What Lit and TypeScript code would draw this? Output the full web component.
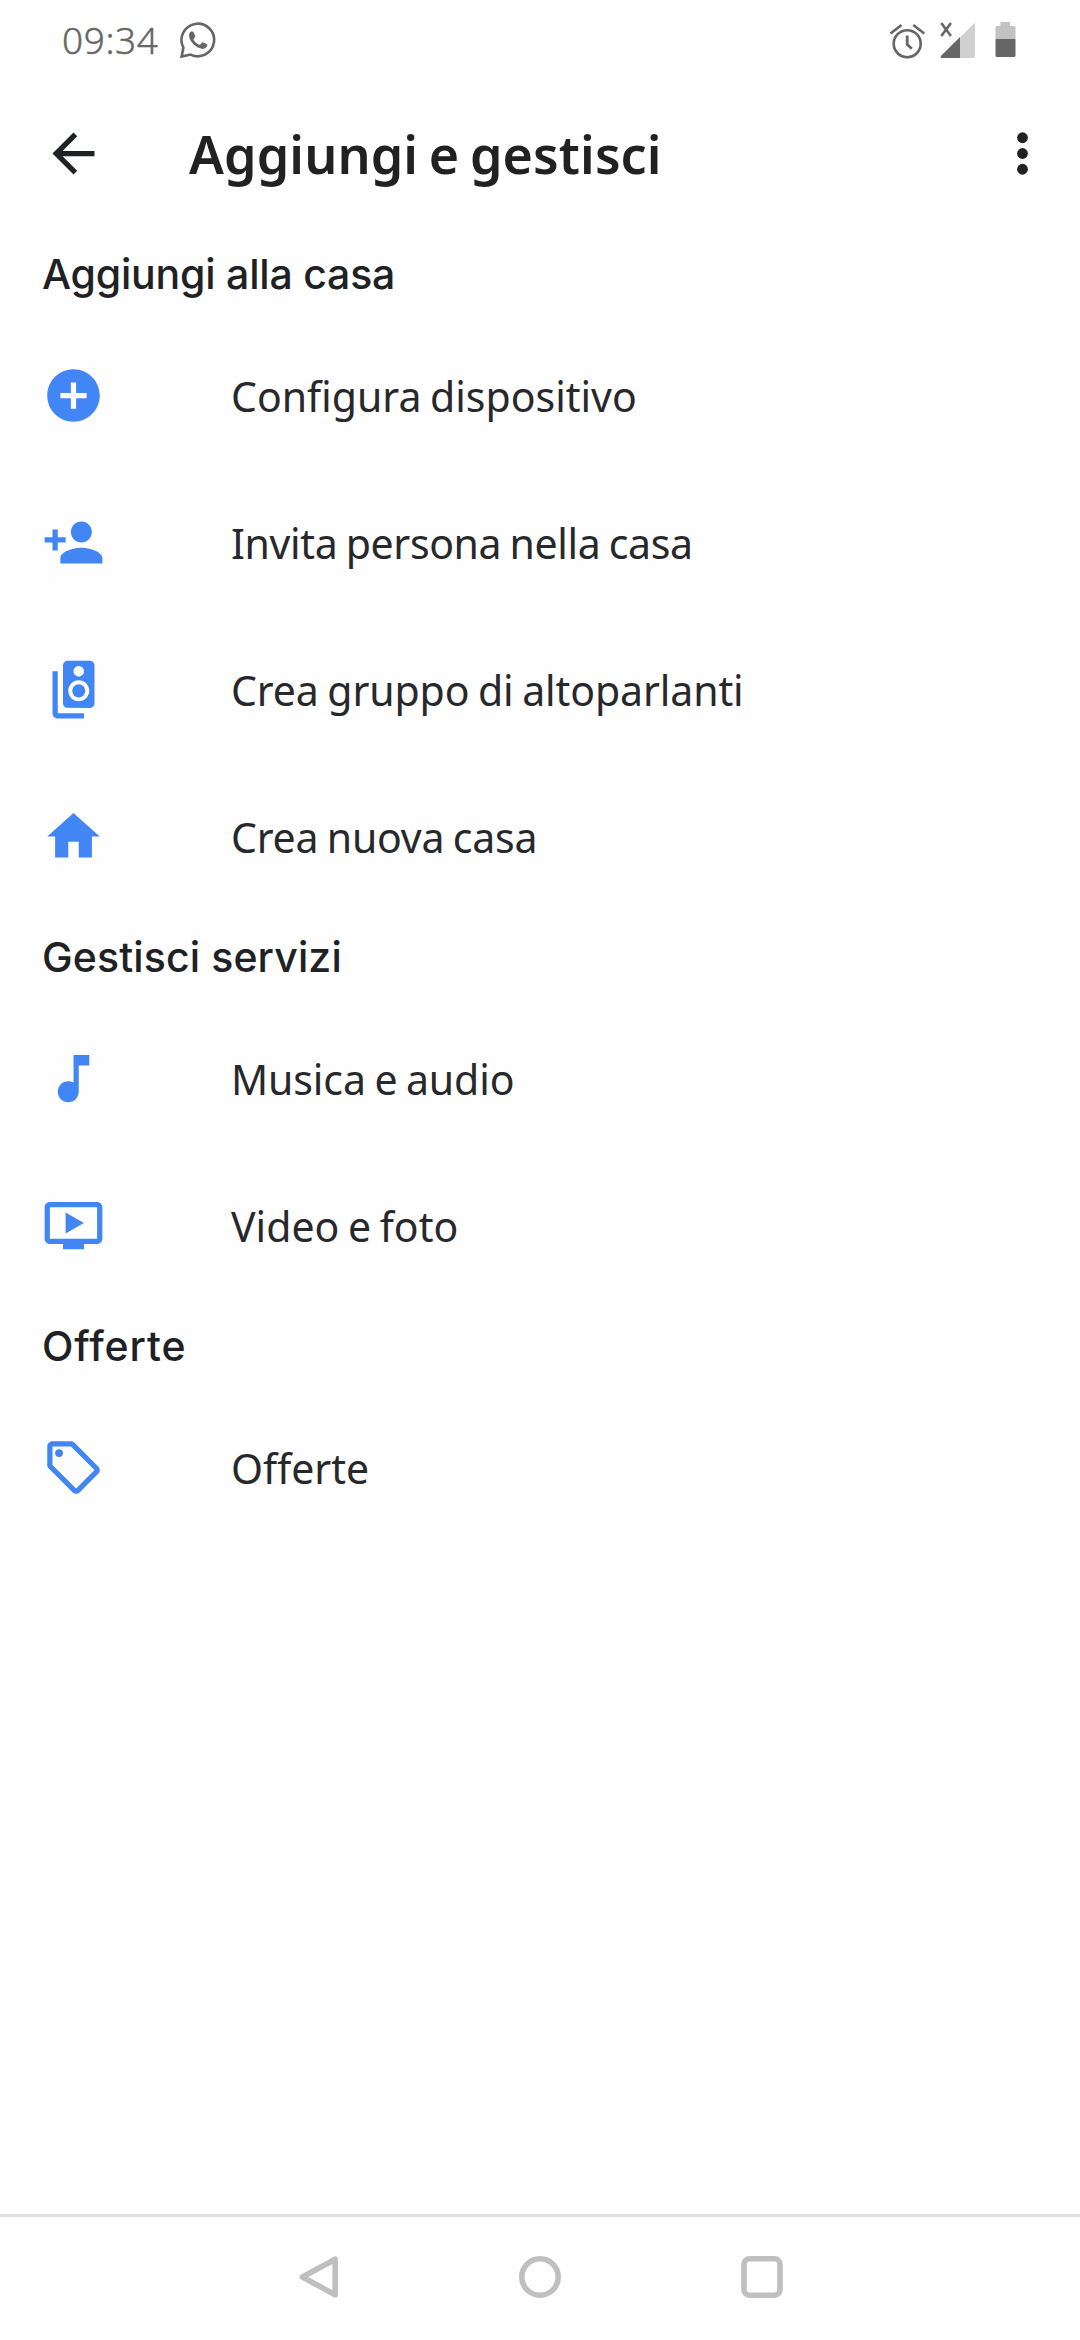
import { LitElement, html, css, svg, type SVGTemplateResult } from "lit";
import { styleMap } from "lit/directives/style-map.js";

interface Item {
  label: string;
  icon: SVGTemplateResult;
  tracking: number;
}

interface Section {
  title: string;
  tracking: number;
  items: Item[];
}

const addCircle = svg`<path d="M12 2C6.48 2 2 6.48 2 12s4.48 10 10 10 10-4.48 10-10S17.52 2 12 2zm5 11h-4v4h-2v-4H7v-2h4V7h2v4h4v2z"/>`;
const personAdd = svg`<path d="M15 12c2.21 0 4-1.79 4-4s-1.79-4-4-4-4 1.79-4 4 1.79 4 4 4zm-9-2V7H4v3H1v2h3v3h2v-3h3v-2H6zm9 4c-2.67 0-8 1.34-8 4v2h16v-2c0-2.66-5.33-4-8-4z"/>`;
const speakerGroup = svg`<path d="M18.2 1H9.8C8.81 1 8 1.81 8 2.8v14.4c0 .99.81 1.79 1.8 1.79l8.4.01c.99 0 1.8-.81 1.8-1.8V2.8c0-.99-.81-1.8-1.8-1.8zM14 3c1.1 0 2 .89 2 2s-.9 2-2 2-2-.89-2-2 .9-2 2-2zm0 13.5c-2.21 0-4-1.79-4-4s1.79-4 4-4 4 1.79 4 4-1.79 4-4 4z"/><circle cx="14" cy="12.5" r="2.5"/><path d="M6 5H4v16c0 1.1.89 2 2 2h10v-2H6V5z"/>`;
const home = svg`<path d="M10 20v-6h4v6h5v-8h3L12 3 2 12h3v8z"/>`;
const musicNote = svg`<path d="M12 3v10.55c-.59-.34-1.27-.55-2-.55-2.21 0-4 1.79-4 4s1.79 4 4 4 4-1.79 4-4V7h4V3h-6z"/>`;
const onDemandVideo = svg`<path d="M21 3H3c-1.11 0-2 .89-2 2v12c0 1.1.89 2 2 2h5v2h8v-2h5c1.1 0 1.99-.9 1.99-2L23 5c0-1.11-.9-2-2-2zm0 14H3V5h18v12zm-5-6l-7 4V7z"/>`;
const tag = svg`<path d="M21.41 11.58l-9-9C12.05 2.22 11.55 2 11 2H4c-1.1 0-2 .9-2 2v7c0 .55.22 1.05.59 1.42l9 9c.36.36.86.58 1.41.58s1.05-.22 1.41-.59l7-7c.37-.36.59-.86.59-1.41s-.23-1.06-.59-1.42zM13 20.01L4 11V4h7v-.01l9 9-7 7.02z"/><circle cx="6.5" cy="6.5" r="1.5"/>`;

const sections: Section[] = [
  {
    title: "Aggiungi alla casa",
    tracking: -0.2,
    items: [
      { label: "Configura dispositivo", icon: addCircle, tracking: 0 },
      { label: "Invita persona nella casa", icon: personAdd, tracking: -0.35 },
      { label: "Crea gruppo di altoparlanti", icon: speakerGroup, tracking: -0.1 },
      { label: "Crea nuova casa", icon: home, tracking: -0.2 },
    ],
  },
  {
    title: "Gestisci servizi",
    tracking: 0.12,
    items: [
      { label: "Musica e audio", icon: musicNote, tracking: -0.1 },
      { label: "Video e foto", icon: onDemandVideo, tracking: 0 },
    ],
  },
  { title: "Offerte", tracking: 0.9, items: [{ label: "Offerte", icon: tag, tracking: 0 }] },
];

class StatusBar extends LitElement {
  static styles = css`
    :host {
      display: flex;
      align-items: flex-start;
      box-sizing: border-box;
      height: 80px;
      padding: 22px 64px 0 62px;
      color: #666;
      font-family: "Noto Sans", sans-serif;
    }
    .time {
      font-size: 37px;
      font-weight: 300;
      line-height: 35px;
      letter-spacing: 0.6px;
      width: 118px;
      -webkit-text-stroke: 0.4px #666;
    }
    svg {
      display: block;
      flex: none;
    }
    .spacer {
      flex: 1;
    }
    .alarm {
      margin-right: 15px;
    }
    .signal {
      margin-right: 20px;
    }
  `;

  render() {
    return html`
      <span class="time">09:34</span>
      <svg width="36" height="36" viewBox="0 0 36 36">
        <path
          d="M1.6 34.6 L3.4 25.6 A16.3 16.3 0 1 1 10.6 32.6 Z"
          fill="none" stroke="#666" stroke-width="2.6"
        />
        <path
          fill="#666"
          d="M9.3 11.8c.4-1.6 1.4-2.2 2.4-2.2 1.200 0 1.700.1 2.100 1.100l1.300 3.100c.3.8.1 1.300-.3 1.800l-1.100 1.300c-.3.4-.3.6 0 1.100 1.400 2.200 3 3.600 5.400 4.700.5.2.8.2 1.200-.2l1.500-1.800c.4-.5.8-.5 1.300-.3l3.300 1.600c.7.3 1 .6.9 1.300-.2 1.900-1.700 3.100-3.500 3.500-2.200.4-5.300-.7-8-2.700-2.600-1.900-4.900-4.600-6-7.200-.7-1.700-.9-3.700-.5-5.100z"
        />
      </svg>
      <span class="spacer"></span>
      <svg class="alarm" width="36" height="37" viewBox="0 0 36 37" fill="none" stroke="#666">
        <circle cx="18.200" cy="21.700" r="13.500" stroke-width="2.600" />
        <path d="M18.200 13.600v8.800l4.600 4.400" stroke-width="2.800" />
        <path d="M1.500 11.600l11-8.600M24.300 3l11 8.600" stroke-width="2.600" />
      </svg>
      <svg class="signal" width="35" height="37" viewBox="0 0 35 37">
        <path d="M35 1v32.500q0 2.500-2.500 2.500H20V15.500L34 1.400z" fill="#d0d0d0" />
        <path d="M20 15v21H1.500q-1.500-.6-.6-2z" fill="#666" />
        <path d="M1.300 1l9.600 13M10.900 1L1.300 14" stroke="#666" stroke-width="2.600" fill="none" />
      </svg>
      <svg width="21" height="36" viewBox="0 0 21 36">
        <path d="M5.500 0h9.500v4h4q1.500 0 1.500 1.500V17H.5V5.500Q.5 4 2 4h3.500z" fill="#c2c2c2" />
        <path d="M.5 17h20v16.500q0 1.500-1.500 1.500H2Q.5 35 .5 33.500z" fill="#666" />
      </svg>
    `;
  }
}
customElements.define("status-bar", StatusBar);

class TopBar extends LitElement {
  static styles = css`
    :host {
      display: flex;
      align-items: center;
      box-sizing: border-box;
      height: 147px;
      padding: 0 26px 0 42px;
      color: #202124;
    }
    svg {
      display: block;
      flex: none;
      width: 63px;
      height: 63px;
      fill: currentColor;
    }
    .title {
      flex: 1;
      margin: 0;
      padding: 1px 0 0 84px;
      font-family: "Noto Sans", sans-serif;
      font-size: 52px;
      font-weight: 600;
      letter-spacing: 0.1px;
      word-spacing: -3px;
      line-height: 70px;
      color: #212121;
    }
  `;

  render() {
    return html`
      <svg viewBox="0 0 24 24">
        <path d="M20 11H7.830l5.590-5.590L12 4l-8 8 8 8 1.410-1.410L7.830 13H20v-2z" />
      </svg>
      <h1 class="title">Aggiungi e gestisci</h1>
      <svg viewBox="0 0 24 24">
        <circle cx="12" cy="6" r="2.050" />
        <circle cx="12" cy="12" r="2.050" />
        <circle cx="12" cy="18" r="2.050" />
      </svg>
    `;
  }
}
customElements.define("top-bar", TopBar);

class NavBar extends LitElement {
  static styles = css`
    :host {
      display: flex;
      justify-content: center;
      gap: 180px;
      box-sizing: border-box;
      height: 126px;
      padding-top: 38px;
      border-top: 3px solid #e0e0e0;
    }
    svg {
      display: block;
      width: 42px;
      height: 44px;
      fill: none;
      stroke: #bfbfbf;
      stroke-width: 5.600;
      stroke-linejoin: round;
    }
  `;

  render() {
    return html`
      <svg viewBox="0 0 42 44"><path d="M38.200 4.200v35.600L5.400 22z" /></svg>
      <svg viewBox="0 0 42 44"><circle cx="21" cy="22" r="18.200" /></svg>
      <svg viewBox="0 0 42 44"><rect x="3" y="3.800" width="36" height="36.400" rx="5.500" /></svg>
    `;
  }
}
customElements.define("nav-bar", NavBar);

class AppRoot extends LitElement {
  static styles = css`
    :host {
      display: flex;
      flex-direction: column;
      width: 1080px;
      height: 2340px;
      background: #fefefe;
      color: #202124;
      font-family: "Noto Sans", sans-serif;
      overflow: hidden;
    }
    .content {
      flex: 1;
    }
    .heading {
      display: flex;
      align-items: center;
      box-sizing: border-box;
      height: 95px;
      margin: 0;
      padding: 0 42px 1px;
      font-family: Inter, "Noto Sans", sans-serif;
      font-size: 41px;
      font-weight: 500;
    }
    .row {
      display: flex;
      align-items: center;
      height: 147px;
      padding: 0 42px;
      gap: 126px;
    }
    .row svg {
      display: block;
      flex: none;
      width: 63px;
      height: 63px;
      fill: #4285f4;
    }
    .label {
      padding-top: 1px;
      font-size: 41px;
      font-weight: 400;
      line-height: 60px;
      word-spacing: -2px;
      color: #27282b;
    }
  `;

  render() {
    return html`
      <status-bar></status-bar>
      <top-bar></top-bar>
      <main class="content">
        ${sections.map(
          (s) => html`
            <h2 class="heading" style=${styleMap({ letterSpacing: `${s.tracking}px` })}>${s.title}</h2>
            ${s.items.map(
              (i) => html`
                <div class="row">
                  <svg viewBox="0 0 24 24">${i.icon}</svg>
                  <span class="label" style=${styleMap({ letterSpacing: `${i.tracking}px` })}>${i.label}</span>
                </div>
              `,
            )}
          `,
        )}
      </main>
      <nav-bar></nav-bar>
    `;
  }
}
customElements.define("app-root", AppRoot);
